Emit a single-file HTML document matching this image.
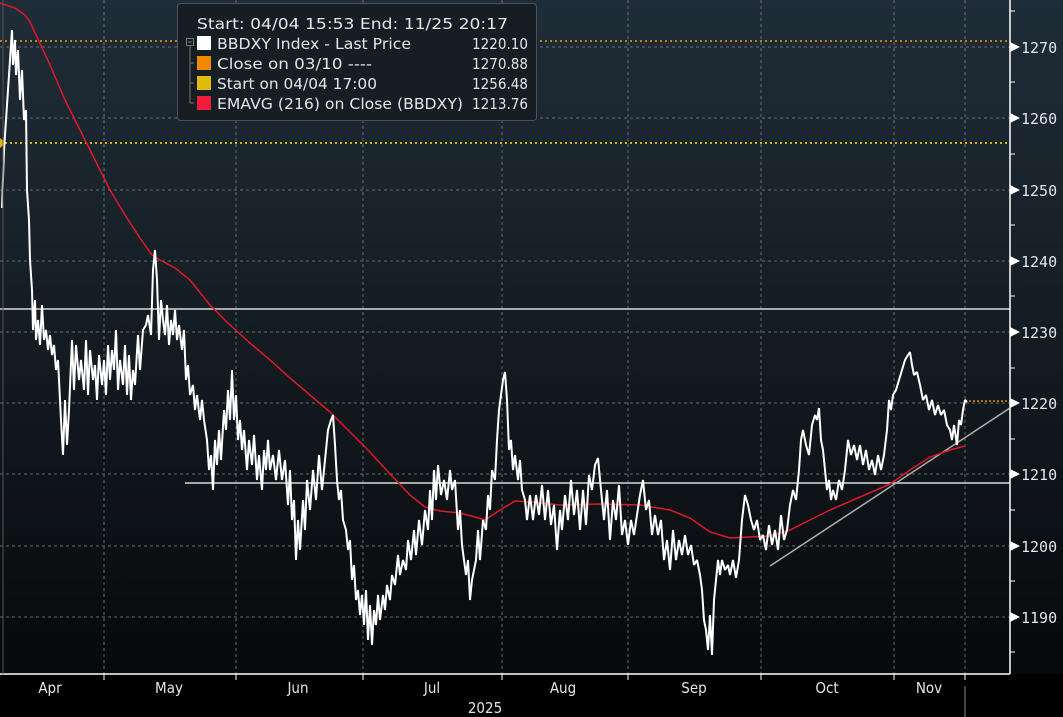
<!DOCTYPE html>
<html><head><meta charset="utf-8"><style>
html,body{margin:0;padding:0;background:#000;}
svg{display:block;}
text{font-family:"DejaVu Sans Condensed","Liberation Sans",sans-serif;}
.m{font-family:"DejaVu Sans Mono","Liberation Mono",monospace;}
.d{font-family:"DejaVu Sans","Liberation Sans",sans-serif;}
</style></head><body>
<svg width="1063" height="717" viewBox="0 0 1063 717" xmlns="http://www.w3.org/2000/svg">
<defs>
<linearGradient id="bg" x1="0" y1="0" x2="0" y2="1">
<stop offset="0" stop-color="#1f2d38"/><stop offset="0.5" stop-color="#141c22"/><stop offset="1" stop-color="#07090b"/>
</linearGradient>
</defs>
<rect width="1063" height="717" fill="#000"/>
<rect x="0" y="0" width="1063" height="674" fill="url(#bg)"/>
<g stroke="#7a8288" stroke-width="1" stroke-dasharray="3,3" opacity="0.8">
<line x1="0" y1="47" x2="1010" y2="47"/><line x1="0" y1="118" x2="1010" y2="118"/>
<line x1="0" y1="190" x2="1010" y2="190"/><line x1="0" y1="261" x2="1010" y2="261"/>
<line x1="0" y1="332" x2="1010" y2="332"/><line x1="0" y1="403" x2="1010" y2="403"/>
<line x1="0" y1="474" x2="1010" y2="474"/><line x1="0" y1="546" x2="1010" y2="546"/>
<line x1="0" y1="617" x2="1010" y2="617"/>
<line x1="104" y1="0" x2="104" y2="674"/><line x1="236" y1="0" x2="236" y2="674"/>
<line x1="363" y1="0" x2="363" y2="674"/><line x1="502" y1="0" x2="502" y2="674"/>
<line x1="628" y1="0" x2="628" y2="674"/><line x1="761" y1="0" x2="761" y2="674"/>
<line x1="894" y1="0" x2="894" y2="674"/><line x1="965" y1="0" x2="965" y2="674"/>
</g>
<line x1="0" y1="41" x2="1010" y2="41" stroke="#c77d10" stroke-width="2" stroke-dasharray="2,3"/>
<line x1="0" y1="143" x2="1010" y2="143" stroke="#e0b400" stroke-width="2" stroke-dasharray="2,3"/>
<polygon points="0,138 6,143 0,148" fill="#e0b400"/>
<line x1="0" y1="309" x2="1010" y2="309" stroke="#d8d8d8" stroke-width="1.5"/>
<line x1="185" y1="483" x2="1010" y2="483" stroke="#d8d8d8" stroke-width="1.5"/>
<line x1="770" y1="566" x2="1010" y2="408" stroke="#b0b0b0" stroke-width="1.5"/>
<line x1="965" y1="401" x2="1010" y2="401" stroke="#e08a10" stroke-width="1.5" stroke-dasharray="2,2"/>
<polyline fill="none" stroke="#e0182a" stroke-width="1.5" points="0,3 15,8 25,15 30,22 50,65 65,100 80,130 95,160 110,190 125,215 140,238 152,255 160,260 175,268 190,280 210,305 230,325 250,343 270,360 290,378 310,395 330,412 350,432 370,452 390,474 410,495 425,507 440,511 460,513 475,517 485,520 500,510 515,501 530,502 560,505 600,504 640,505 670,510 690,518 710,532 730,538 750,537 770,536 790,530 810,520 830,510 860,497 890,484 910,470 930,457 950,450 965,446"/>
<polyline fill="none" stroke="#fff" stroke-width="2" stroke-linejoin="bevel" points="2,208 4,150 6,120 8,90 10,60 12,30 13,65 15,40 16,75 18,50 20,100 22,70 24,120 26,110 27,190 29,220 30,260 32,290 33,330 35,300 36,340 38,320 40,345 42,305 44,340 46,330 48,350 50,335 52,355 54,345 56,370 58,360 61,420 63,455 65,400 67,445 69,410 72,340 74,390 76,345 79,380 81,360 84,390 86,340 88,395 90,350 93,380 95,365 97,400 99,355 102,385 104,360 106,395 108,345 110,380 112,350 114,370 116,330 118,390 120,360 123,385 125,345 127,395 129,355 131,400 133,370 135,385 138,335 140,370 143,330 146,325 148,315 151,335 153,270 155,250 157,280 159,340 161,300 163,320 165,335 167,305 169,345 171,320 173,335 175,310 177,340 179,325 182,350 184,330 186,380 188,365 190,395 193,385 195,410 197,395 200,420 202,400 204,420 207,440 209,470 211,455 213,490 215,440 217,465 219,430 221,460 224,410 226,430 228,390 230,420 232,370 234,420 236,395 238,440 240,420 242,450 244,430 247,470 249,440 252,465 254,435 257,480 259,455 262,490 264,450 266,470 268,440 270,470 273,455 276,480 279,450 282,480 285,460 288,505 290,470 292,520 294,500 296,560 298,520 300,550 303,500 305,530 307,480 310,510 313,470 316,500 319,455 322,490 325,460 328,430 331,420 333,415 335,445 337,480 339,500 341,490 343,520 346,530 348,550 350,540 352,580 354,565 356,600 358,590 360,615 362,595 364,625 366,590 368,640 370,605 372,645 374,610 376,625 378,595 380,620 383,595 385,610 387,585 390,600 392,575 395,585 398,555 400,575 403,560 406,570 408,540 411,560 414,530 416,555 419,520 422,545 425,510 428,530 430,490 432,520 434,470 436,500 438,465 441,495 444,480 447,500 450,470 452,490 455,480 458,530 460,510 462,545 464,560 466,575 468,560 470,600 472,580 474,570 476,560 478,530 480,560 483,520 486,530 488,495 490,510 492,470 495,480 497,440 499,410 501,395 503,380 505,372 507,400 509,450 511,440 513,470 515,455 518,480 520,460 522,490 525,500 527,520 530,495 533,520 536,495 539,515 542,485 545,520 548,490 551,525 554,505 557,550 560,510 562,530 565,495 568,520 571,480 574,515 577,490 580,530 583,490 586,525 589,475 592,490 595,465 598,458 601,490 604,520 607,490 610,540 613,500 616,520 619,485 622,535 625,520 628,545 631,520 634,535 637,515 640,495 643,480 646,510 649,500 652,535 655,515 658,535 661,520 664,560 667,540 670,570 673,530 676,560 679,540 682,555 685,535 688,555 691,545 694,565 697,560 700,575 702,590 704,620 706,630 708,650 710,615 712,655 714,600 716,580 718,560 720,575 722,560 725,570 728,565 730,575 733,560 736,578 739,560 742,520 745,495 748,505 751,520 754,530 757,520 760,540 763,535 766,550 769,525 772,545 775,530 778,550 781,515 784,540 787,530 790,505 793,490 796,500 799,470 801,440 803,430 806,445 809,455 812,425 815,415 817,420 819,408 821,440 823,450 825,470 827,490 829,480 831,500 833,490 836,500 839,480 842,490 845,470 848,440 851,455 854,445 857,460 860,445 863,465 866,450 869,470 872,460 875,475 878,455 881,470 884,455 887,430 889,400 891,410 893,395 896,390 899,380 902,370 905,360 908,355 910,352 912,365 914,375 917,372 920,385 923,400 926,395 929,410 932,400 935,415 938,405 941,415 944,410 947,425 950,430 952,440 954,425 957,445 959,420 961,425 963,410 965,400 967,402"/>
<line x1="1010" y1="0" x2="1010" y2="674" stroke="#fff" stroke-width="1.5"/>
<line x1="0" y1="674" x2="1010" y2="674" stroke="#fff" stroke-width="1.5"/>
<line x1="3" y1="0" x2="3" y2="674" stroke="#555" stroke-width="1"/>
<g fill="#fff">
<polygon points="1010,42 1020,47 1010,52"/><polygon points="1010,113 1020,118 1010,123"/>
<polygon points="1010,185 1020,190 1010,195"/><polygon points="1010,256 1020,261 1010,266"/>
<polygon points="1010,327 1020,332 1010,337"/><polygon points="1010,398 1020,403 1010,408"/>
<polygon points="1010,469 1020,474 1010,479"/><polygon points="1010,541 1020,546 1010,551"/>
<polygon points="1010,612 1020,617 1010,622"/>
</g>
<g stroke="#fff" stroke-width="1">
<line x1="1010" y1="11" x2="1015" y2="11"/><line x1="1010" y1="82" x2="1015" y2="82"/>
<line x1="1010" y1="154" x2="1015" y2="154"/><line x1="1010" y1="225" x2="1015" y2="225"/>
<line x1="1010" y1="296" x2="1015" y2="296"/><line x1="1010" y1="368" x2="1015" y2="368"/>
<line x1="1010" y1="439" x2="1015" y2="439"/><line x1="1010" y1="510" x2="1015" y2="510"/>
<line x1="1010" y1="581" x2="1015" y2="581"/><line x1="1010" y1="652" x2="1015" y2="652"/>
<line x1="104" y1="674" x2="104" y2="680"/><line x1="236" y1="674" x2="236" y2="680"/>
<line x1="363" y1="674" x2="363" y2="680"/><line x1="502" y1="674" x2="502" y2="680"/>
<line x1="628" y1="674" x2="628" y2="680"/><line x1="761" y1="674" x2="761" y2="680"/>
<line x1="894" y1="674" x2="894" y2="680"/><line x1="965" y1="674" x2="965" y2="680"/>
</g>
<line x1="965" y1="686" x2="965" y2="717" stroke="#888" stroke-width="1"/>
<g fill="#dfe6ee" font-size="15">
<text x="1021" y="53" class="m">1270</text><text x="1021" y="124" class="m">1260</text>
<text x="1021" y="196" class="m">1250</text><text x="1021" y="267" class="m">1240</text>
<text x="1021" y="338" class="m">1230</text><text x="1021" y="409" class="m">1220</text>
<text x="1021" y="480" class="m">1210</text><text x="1021" y="552" class="m">1200</text>
<text x="1021" y="623" class="m">1190</text>
</g>
<g fill="#dfe6ee" font-size="15" text-anchor="middle">
<text x="50" y="693">Apr</text><text x="169" y="693">May</text><text x="298" y="693">Jun</text>
<text x="432" y="693">Jul</text><text x="563" y="693">Aug</text><text x="694" y="693">Sep</text>
<text x="827" y="693">Oct</text><text x="929" y="693">Nov</text>
<text x="485" y="713">2025</text>
</g>
<rect x="177.5" y="3.5" width="359" height="117" rx="3" fill="#161d23" stroke="#4a5158"/>
<g stroke="#777" stroke-width="1" fill="none">
<rect x="186.5" y="38.5" width="7" height="7"/>
<line x1="190" y1="46" x2="190" y2="103"/>
<line x1="190" y1="63" x2="194" y2="63"/><line x1="190" y1="83" x2="194" y2="83"/><line x1="190" y1="103" x2="194" y2="103"/>
<line x1="188" y1="42" x2="192" y2="42"/>
</g>
<rect x="197" y="36" width="14" height="14" fill="#fff"/>
<rect x="197" y="56" width="14" height="14" fill="#ef8a00"/>
<rect x="197" y="76" width="14" height="14" fill="#e0bc0c"/>
<rect x="197" y="96" width="14" height="14" fill="#f21c3c"/>
<g fill="#e2e6ea" font-size="15">
<text class="d" x="197" y="29" textLength="311" lengthAdjust="spacingAndGlyphs">Start: 04/04 15:53 End: 11/25 20:17</text>
<text class="d" x="217" y="49" textLength="194" lengthAdjust="spacingAndGlyphs">BBDXY Index - Last Price</text>
<text class="d" x="217" y="69" textLength="155" lengthAdjust="spacingAndGlyphs">Close on 03/10 ----</text>
<text class="d" x="217" y="89" textLength="160" lengthAdjust="spacingAndGlyphs">Start on 04/04 17:00</text>
<text class="d" x="217" y="109" textLength="246" lengthAdjust="spacingAndGlyphs">EMAVG (216)  on Close (BBDXY)</text>
<text class="d" x="472" y="49" textLength="56" lengthAdjust="spacingAndGlyphs">1220.10</text>
<text class="d" x="472" y="69" textLength="56" lengthAdjust="spacingAndGlyphs">1270.88</text>
<text class="d" x="472" y="89" textLength="56" lengthAdjust="spacingAndGlyphs">1256.48</text>
<text class="d" x="472" y="109" textLength="56" lengthAdjust="spacingAndGlyphs">1213.76</text>
</g>
</svg>
</body></html>
